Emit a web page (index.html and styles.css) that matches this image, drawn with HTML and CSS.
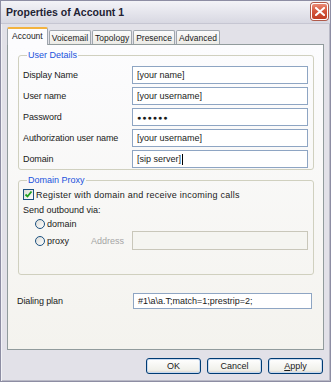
FILE: index.html
```html
<!DOCTYPE html>
<html>
<head>
<meta charset="utf-8">
<link rel="stylesheet" href="styles.css">
</head>
<body>
<div class="window">
  <div class="titlebar">
    <span class="title">Properties of Account 1</span>
    <div class="close"><svg width="10" height="9" viewBox="0 0 10 9"><path d="M1 1 L9 8 M9 1 L1 8" stroke="#fff" stroke-width="2" stroke-linecap="square"/></svg></div>
  </div>
  <div class="body">
    <div class="tabs">
      <div class="tab active">Account</div>
      <div class="tab">Voicemail</div>
      <div class="tab">Topology</div>
      <div class="tab">Presence</div>
      <div class="tab">Advanced</div>
    </div>
    <div class="panel">
      <fieldset class="group g1">
        <legend>User Details</legend>
        <div class="row"><span class="lbl">Display Name</span><div class="field">[your name]</div></div>
        <div class="row"><span class="lbl">User name</span><div class="field">[your username]</div></div>
        <div class="row"><span class="lbl">Password</span><div class="field dots">●●●●●●</div></div>
        <div class="row"><span class="lbl">Authorization user name</span><div class="field">[your username]</div></div>
        <div class="row"><span class="lbl">Domain</span><div class="field">[sip server]<span class="caret"></span></div></div>
      </fieldset>
      <fieldset class="group g2">
        <legend>Domain Proxy</legend>
        <div class="check-row"><span class="checkbox"><svg width="9" height="9" viewBox="0 0 9 9"><path d="M1.5 4.5 L3.5 6.5 L7.5 1.5" stroke="#21a121" stroke-width="1.8" fill="none"/></svg></span><span class="reg">Register with domain and receive incoming calls</span></div>
        <div class="send">Send outbound via:</div>
        <div class="radio-row"><span class="radio"></span><span>domain</span></div>
        <div class="radio-row proxy"><span class="radio"></span><span class="rlabel">proxy</span><span class="addr">Address</span><div class="field disabled"></div></div>
      </fieldset>
      <div class="dial"><span class="lbl">Dialing plan</span><div class="field">#1\a\a.T;match=1;prestrip=2;</div></div>
    </div>
    <div class="buttons">
      <div class="btn">OK</div>
      <div class="btn">Cancel</div>
      <div class="btn"><u>A</u>pply</div>
    </div>
  </div>
</div>
</body>
</html>
```
FILE: styles.css
```css
* { box-sizing: border-box; }
html, body { margin: 0; padding: 0; }
body {
  width: 331px; height: 382px;
  font-family: "Liberation Sans", Arial, sans-serif;
  font-size: 9px;
  color: #1a1a1a;
  background: #fff;
}
.window {
  width: 331px; height: 382px;
  border: 1px solid #8d8da3;
  background: #e2e1e8;
  display: flex; flex-direction: column;
  box-shadow: inset 1px 1px 0 #f2f2f6, inset -1px -1px 0 #b9b9c6;
}
.titlebar {
  height: 23px;
  flex: none;
  display: flex; align-items: center; justify-content: space-between;
  padding: 0 2px 0 5px;
  background: linear-gradient(#f3f3f7, #e7e7ee 45%, #d8d8e2);
  border-bottom: 1px solid #c6c6d2;
}
.title { font-weight: bold; font-size: 10.5px; color: #222233; }
.close {
  width: 17px; height: 17px;
  border: 1px solid #ffffff;
  border-radius: 3px;
  background: linear-gradient(#e98a75, #d4553b 50%, #c13e24);
  display: flex; align-items: center; justify-content: center;
  box-shadow: 0 0 0 1px #b05a4a;
  margin-top: -1px;
}
.body {
  flex: 1;
  display: flex; flex-direction: column;
  padding: 3px 6px 0 6px;
}
.tabs {
  display: flex; align-items: flex-end;
  height: 17px;
  position: relative; z-index: 1;
}
.tab {
  height: 14px;
  padding: 0 2px;
  border: 1px solid #9fa6ad;
  border-bottom: none;
  border-radius: 2px 2px 0 0;
  background: linear-gradient(#fbfbfb, #ecebe6);
  display: flex; align-items: center;
  margin-left: 1px;
  font-size: 8.5px;
}
.tab:first-child { margin-left: 0; }
.tab.active {
  height: 18px;
  padding: 2px 4px 0 4px;
  background: #fcfcfe;
  border-top: 2px solid #f3b340;
  margin-bottom: -1px;
  align-items: flex-start;
}
.panel {
  height: 306px;
  border: 1px solid #919b9c;
  background: linear-gradient(#fcfcfe, #f4f3ee);
  padding: 5px 9px 0 10px;
  display: flex; flex-direction: column;
}
.group {
  margin: 0; padding: 0;
  border: 1px solid #d0d0bf;
  border-radius: 3px;
}
.group legend {
  color: #1a52dc;
  padding: 0 1px;
  margin-left: 4px;
  font-size: 9px;
  line-height: 10px;
}
.g1 { height: 120px; padding: 6px 5px 0 4px; display: flex; flex-direction: column; gap: 3px; }
.row { display: flex; align-items: center; justify-content: space-between; height: 18px; }
.lbl { letter-spacing: -0.1px; }
.field {
  width: 176px; height: 18px;
  border: 1px solid #8ea5c3;
  background: #fff;
  padding: 0 4px;
  display: flex; align-items: center;
  white-space: nowrap;
}
.dots { font-size: 7px; letter-spacing: 1px; }
.caret { display: inline-block; width: 1px; height: 11px; background: #000; margin-left: 1px; }
.g2 { margin-top: 5px; height: 100px; padding: 3px 5px 0 4px; display: flex; flex-direction: column; }
.check-row { display: flex; align-items: center; gap: 2px; height: 13px; }
.reg { letter-spacing: 0.25px; }
.checkbox {
  width: 11px; height: 11px;
  border: 1px solid #1c5180;
  background: linear-gradient(135deg, #dcdcd7, #fff);
  display: flex; align-items: center; justify-content: center;
}
.send { margin-top: 3px; height: 12px; line-height: 12px; }
.radio-row { display: flex; align-items: center; height: 12px; padding-left: 12px; margin-top: 2px; gap: 2px; }
.radio {
  width: 10px; height: 10px; border-radius: 50%;
  border: 1px solid #1c5180;
  background: linear-gradient(135deg, #dcdcd7, #fff);
}
.proxy { margin-top: 1px; height: 19px; }
.rlabel { width: 42px; }
.addr { color: #a5a5a5; flex: 1; }
.field.disabled { background: #f5f5f1; border-color: #c9c7ba; height: 19px; }
.dial {
  margin-top: 18px;
  display: flex; align-items: center; justify-content: space-between;
  height: 16px;
  padding-right: 2px;
  margin-left: -1px;
}
.dial .field { width: 179px; height: 16px; }
.buttons {
  display: flex; justify-content: flex-end; gap: 6px;
  padding-top: 8px; padding-right: 1px;
}
.btn {
  width: 55px; height: 16px;
  border: 1px solid #003c74;
  border-radius: 3px;
  background: linear-gradient(#ffffff, #f0f0ea 80%, #d6d0c5);
  display: flex; align-items: center; justify-content: center;
  box-shadow: inset 0 0 0 1px #c7d9f0;
}
```
